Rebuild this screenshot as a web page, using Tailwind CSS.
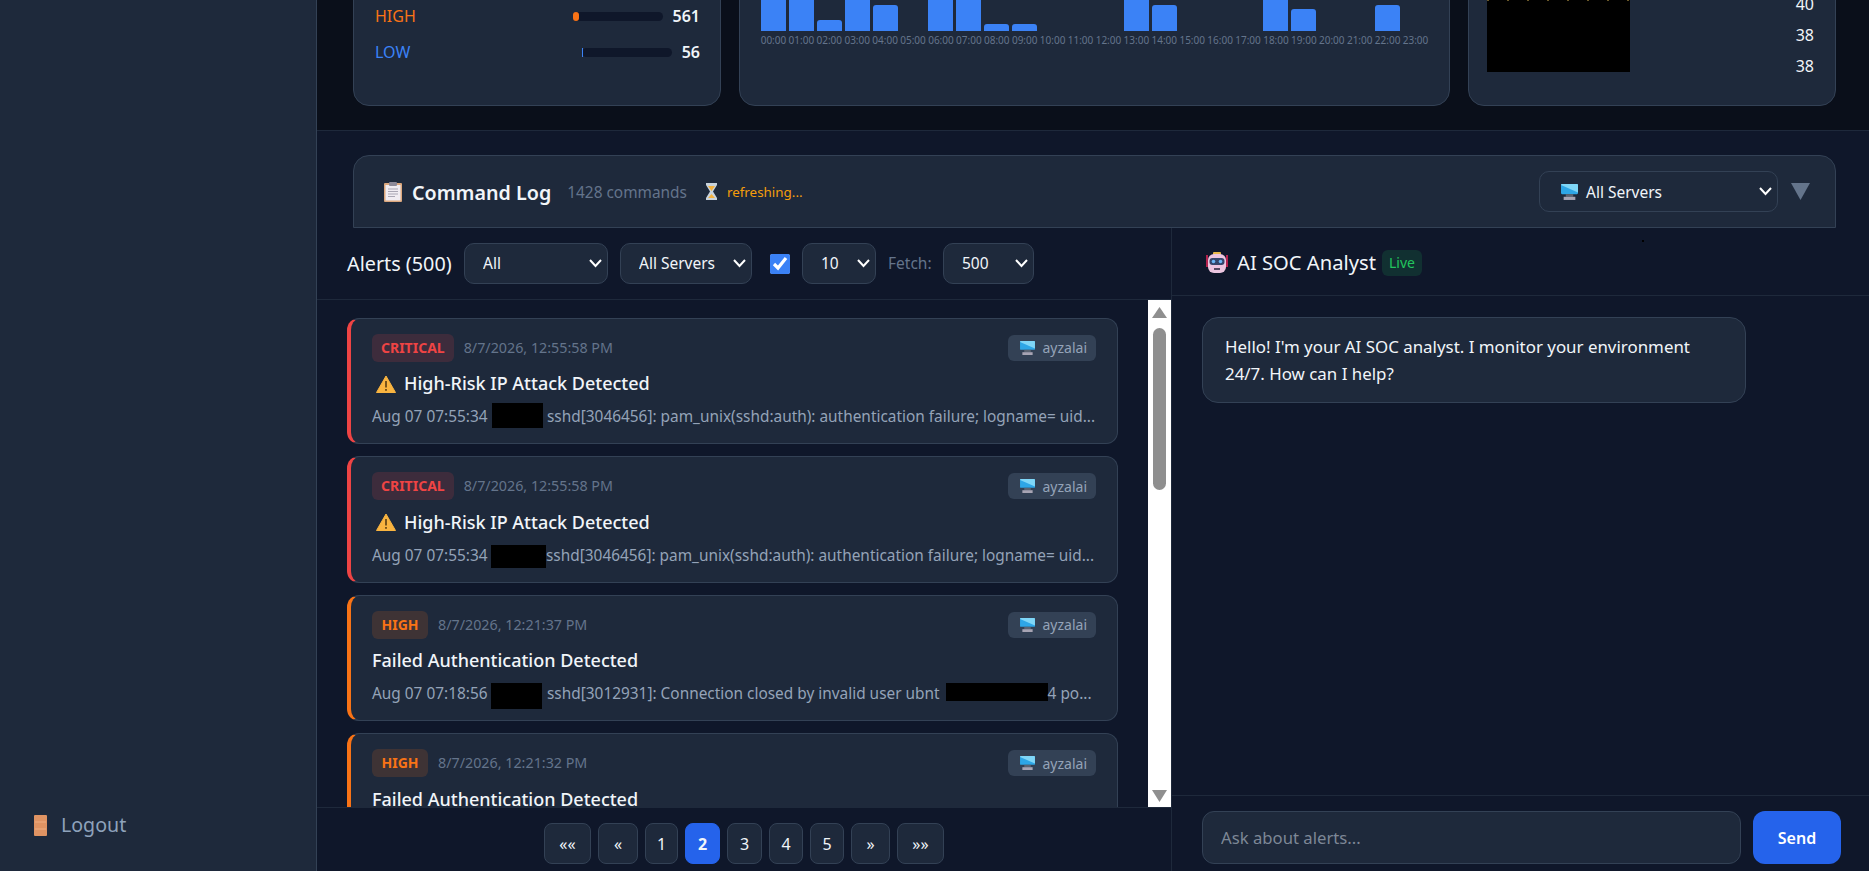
<!DOCTYPE html>
<html lang="en">
<head>
  <meta charset="UTF-8" />
  <title>SOC Dashboard</title>
  <script src="https://cdn.jsdelivr.net/npm/@tailwindcss/browser@4"></script>
</head>
<body class="h-[871px] overflow-hidden bg-[#0f172a] font-['Noto_Sans',sans-serif] text-[#f1f5f9]">

  <!-- Emoji icons -->
  <svg class="hidden">
    <symbol id="pc" viewBox="0 0 16 15">
      <rect x="0" y="0" width="16" height="9.500" rx="1" fill="#2ea6e6"/>
      <path d="M0 1 L16 8 V1 a1 1 0 0 0 -1 -1 H1 a1 1 0 0 0 -1 1z" fill="#7fd6f7"/>
      <rect x="4.500" y="9.500" width="7" height="2.500" fill="#5b6472"/>
      <rect x="2.500" y="12" width="11" height="3" fill="#a7a4b3"/>
    </symbol>
    <symbol id="warn" viewBox="0 0 20 18">
      <path d="M10 1 L19.5 17.5 H0.5 Z" fill="#f9b440" stroke="#f9b440" stroke-linejoin="round"/>
      <rect x="9.2" y="6" width="1.6" height="6.5" fill="#5a3d12"/>
      <rect x="9.2" y="14" width="1.6" height="1.8" fill="#5a3d12"/>
    </symbol>
  </svg>

  <div class="flex h-full">
    <!-- Sidebar -->
    <aside class="w-[317px] shrink-0 bg-[#1e293b] border-r border-[#334155] flex flex-col justify-end pl-[34px] pb-[35px]">
      <a class="flex items-center gap-[14px] text-[19.600px] leading-[22px] text-[#8ea2bb]">
        <svg width="13" height="21" viewBox="0 0 13 21"><rect width="13" height="21" rx="1" fill="#df9363"/><path d="M1 7h11M1 14h11" stroke="#f0b48c" stroke-width="0.8"/></svg>
        Logout
      </a>
    </aside>

    <main class="flex-1 min-w-0 flex flex-col">
      <!-- Stats, scrolled partly out of view -->
      <section class="h-[131px] shrink-0 overflow-hidden bg-[#0a0f1a] border-b border-[#1e293b] pl-[36px] pb-[24px] flex flex-col justify-end">
        <div class="grid grid-cols-[368px_711px_368px] gap-[18px]">
          <div class="h-[160px] bg-[#1e293b] border border-[#334155] rounded-2xl flex flex-col justify-end pl-[21px] pr-[20px] pb-[35px]">
            <div class="h-[36px] flex items-center text-[16px] text-[#f97316]">
              <span>HIGH</span>
              <div class="ml-auto w-[90px] h-[9px] rounded-full bg-[#0f172a]"><div class="w-[6px] h-full rounded-full bg-[#f97316]"></div></div>
              <span class="ml-[10px] font-semibold text-[#f1f5f9]">561</span>
            </div>
            <div class="h-[36px] flex items-center text-[16px] text-[#3b82f6]">
              <span>LOW</span>
              <div class="ml-auto w-[90px] h-[9px] rounded-full bg-[#0f172a]"><div class="w-[1px] h-full bg-[#3b82f6]"></div></div>
              <span class="ml-[10px] font-semibold text-[#f1f5f9]">56</span>
            </div>
          </div>

          <div class="h-[160px] bg-[#1e293b] border border-[#334155] rounded-2xl flex flex-col justify-end px-[21px] pb-[57px]">
            <div class="grid grid-cols-24 gap-x-[3px] items-end text-[10px] leading-[15px] text-[#64748b]">
              <div class="flex flex-col items-center gap-[2px]"><div class="w-full h-[50px] rounded-t-[3px] bg-[#3b82f6]"></div><span>00:00</span></div>
              <div class="flex flex-col items-center gap-[2px]"><div class="w-full h-[50px] rounded-t-[3px] bg-[#3b82f6]"></div><span>01:00</span></div>
              <div class="flex flex-col items-center gap-[2px]"><div class="w-full h-[11px] rounded-t-[3px] bg-[#3b82f6]"></div><span>02:00</span></div>
              <div class="flex flex-col items-center gap-[2px]"><div class="w-full h-[50px] rounded-t-[3px] bg-[#3b82f6]"></div><span>03:00</span></div>
              <div class="flex flex-col items-center gap-[2px]"><div class="w-full h-[26px] rounded-t-[3px] bg-[#3b82f6]"></div><span>04:00</span></div>
              <div class="flex flex-col items-center gap-[2px]"><span>05:00</span></div>
              <div class="flex flex-col items-center gap-[2px]"><div class="w-full h-[50px] rounded-t-[3px] bg-[#3b82f6]"></div><span>06:00</span></div>
              <div class="flex flex-col items-center gap-[2px]"><div class="w-full h-[50px] rounded-t-[3px] bg-[#3b82f6]"></div><span>07:00</span></div>
              <div class="flex flex-col items-center gap-[2px]"><div class="w-full h-[7px] rounded-t-[3px] bg-[#3b82f6]"></div><span>08:00</span></div>
              <div class="flex flex-col items-center gap-[2px]"><div class="w-full h-[7px] rounded-t-[3px] bg-[#3b82f6]"></div><span>09:00</span></div>
              <div class="flex flex-col items-center gap-[2px]"><span>10:00</span></div>
              <div class="flex flex-col items-center gap-[2px]"><span>11:00</span></div>
              <div class="flex flex-col items-center gap-[2px]"><span>12:00</span></div>
              <div class="flex flex-col items-center gap-[2px]"><div class="w-full h-[50px] rounded-t-[3px] bg-[#3b82f6]"></div><span>13:00</span></div>
              <div class="flex flex-col items-center gap-[2px]"><div class="w-full h-[26px] rounded-t-[3px] bg-[#3b82f6]"></div><span>14:00</span></div>
              <div class="flex flex-col items-center gap-[2px]"><span>15:00</span></div>
              <div class="flex flex-col items-center gap-[2px]"><span>16:00</span></div>
              <div class="flex flex-col items-center gap-[2px]"><span>17:00</span></div>
              <div class="flex flex-col items-center gap-[2px]"><div class="w-full h-[50px] rounded-t-[3px] bg-[#3b82f6]"></div><span>18:00</span></div>
              <div class="flex flex-col items-center gap-[2px]"><div class="w-full h-[22px] rounded-t-[3px] bg-[#3b82f6]"></div><span>19:00</span></div>
              <div class="flex flex-col items-center gap-[2px]"><span>20:00</span></div>
              <div class="flex flex-col items-center gap-[2px]"><span>21:00</span></div>
              <div class="flex flex-col items-center gap-[2px]"><div class="w-full h-[26px] rounded-t-[3px] bg-[#3b82f6]"></div><span>22:00</span></div>
              <div class="flex flex-col items-center gap-[2px]"><span>23:00</span></div>
            </div>
          </div>

          <div class="h-[160px] bg-[#1e293b] border border-[#334155] rounded-2xl flex justify-between items-end pl-[18px] pr-[21px] pb-[23px]">
            <div class="w-[143px] h-[72px] mb-[10px] bg-black">
              <div class="h-[1px] bg-[repeating-linear-gradient(90deg,#6b5a2a_0_2px,transparent_2px_20px)]"></div>
            </div>
            <div class="text-[16px] leading-[31px] text-[#f1f5f9]">
              <div>40</div>
              <div>38</div>
              <div>38</div>
            </div>
          </div>
        </div>
      </section>

      <!-- Command log header -->
      <section class="shrink-0 pt-[24px] pl-[36px] pr-[33px]">
        <div class="h-[73px] bg-[#1e293b] border border-[#334155] rounded-t-2xl flex items-center pl-[30px] pr-[25px]">
          <svg width="18" height="20" viewBox="0 0 18 20"><rect y="1" width="18" height="19" rx="1" fill="#dba77d"/><rect x="1.500" y="3" width="15" height="15.500" fill="#f0ecf2"/><path d="M4 7h10M4 9.500h10M4 12h10M4 14.500h7" stroke="#a9a6b4"/><rect x="5" y="0" width="8" height="4" rx="1" fill="#8d8a99"/></svg>
          <span class="ml-[10px] mt-[2px] text-[19.700px] font-semibold">Command Log</span>
          <span class="ml-[16px] mt-[2px] text-[15.400px] text-[#64748b]">1428 commands</span>
          <svg class="ml-[19px]" width="11" height="17" viewBox="0 0 11 17"><path d="M0 0h11v2L7 8.500l4 6.500v2H0v-2l4-6.500L0 2z" fill="#c9d3dc"/><path d="M2 3h7L5.500 8zM2 15l3.500-4 3.500 4z" fill="#f4b23f"/></svg>
          <span class="ml-[10px] mt-[2px] text-[13.400px] text-[#f59e0b]">refreshing...</span>
          <div class="relative ml-auto w-[239px] h-[41px]">
            <div class="h-full bg-[#1e293b] border border-[#334155] rounded-[10px] flex items-center pl-[21px] text-[15.500px]">
              <svg class="w-[17px] h-[16px] mr-[8px]"><use href="#pc"/></svg><span class="mt-[2px]">All Servers</span>
            </div>
            <svg class="absolute right-[6px] top-[15px]" width="13" height="10" viewBox="0 0 13 10" fill="none"><path d="M1 2l5.500 6L12 2" stroke="#fff" stroke-width="2"/></svg>
          </div>
          <svg class="ml-[13px]" width="19" height="17" viewBox="0 0 19 17"><path d="M0 0h19L9.500 17z" fill="#64748b"/></svg>
        </div>
      </section>

      <div class="flex-1 min-h-0 flex">
        <!-- Alerts pane -->
        <section class="w-[855px] shrink-0 border-r border-[#1e293b] flex flex-col">
          <div class="h-[72px] shrink-0 border-b border-[#1e293b] flex items-center pl-[30px] gap-[12px] text-[15.500px]">
            <h2 class="w-[105px] text-[19.800px] whitespace-nowrap">Alerts (500)</h2>
            <div class="relative w-[144px] h-[41px]"><select class="appearance-none w-full h-full bg-[#1e293b] border border-[#334155] rounded-[10px] pl-[18px]"><option>All</option></select><svg class="absolute right-[6px] top-[15px]" width="13" height="10" viewBox="0 0 13 10" fill="none"><path d="M1 2l5.500 6L12 2" stroke="#fff" stroke-width="2"/></svg></div>
            <div class="relative w-[132px] h-[41px]"><select class="appearance-none w-full h-full bg-[#1e293b] border border-[#334155] rounded-[10px] pl-[18px]"><option>All Servers</option></select><svg class="absolute right-[6px] top-[15px]" width="13" height="10" viewBox="0 0 13 10" fill="none"><path d="M1 2l5.500 6L12 2" stroke="#fff" stroke-width="2"/></svg></div>
            <input type="checkbox" checked class="w-[20px] h-[20px] ml-[6px] accent-[#3b82f6]" />
            <div class="relative w-[74px] h-[41px]"><select class="appearance-none w-full h-full bg-[#1e293b] border border-[#334155] rounded-[10px] pl-[18px]"><option>10</option></select><svg class="absolute right-[6px] top-[15px]" width="13" height="10" viewBox="0 0 13 10" fill="none"><path d="M1 2l5.500 6L12 2" stroke="#fff" stroke-width="2"/></svg></div>
            <span class="w-[43px] text-[#64748b]">Fetch:</span>
            <div class="relative w-[91px] h-[41px]"><select class="appearance-none w-full h-full bg-[#1e293b] border border-[#334155] rounded-[10px] pl-[18px]"><option>500</option></select><svg class="absolute right-[6px] top-[15px]" width="13" height="10" viewBox="0 0 13 10" fill="none"><path d="M1 2l5.500 6L12 2" stroke="#fff" stroke-width="2"/></svg></div>
          </div>

          <div class="flex-1 min-h-0 flex">
            <div class="flex-1 min-w-0 overflow-hidden pl-[30px] pr-[30px] pt-[17.600px] flex flex-col gap-[12px]">

              <article class="h-[126.500px] shrink-0 bg-[#1e293b] border border-[#334155] border-l-4 border-l-[#ef4444] rounded-xl pl-[21px] pr-[21px] pt-[15px]">
                <div class="h-[28px] flex items-center">
                  <span class="h-[28px] px-[9px] rounded-md bg-[#ef4444]/15 text-[14px] leading-[28px] font-bold text-[#ef4444]">CRITICAL</span>
                  <span class="ml-[10px] text-[14.300px] text-[#64748b]">8/7/2026, 12:55:58 PM</span>
                  <span class="ml-auto h-[26px] pl-[12px] pr-[9px] rounded-md bg-[#334155] flex items-center gap-[7px] text-[14px] text-[#94a3b8]"><svg class="w-[15px] h-[14px]"><use href="#pc"/></svg>ayzalai</span>
                </div>
                <h3 class="mt-[10px] h-[24px] flex items-center text-[18px] font-medium"><svg class="w-[20px] h-[18px] ml-[4px] mr-[8px]"><use href="#warn"/></svg>High-Risk IP Attack Detected</h3>
                <p class="mt-[10px] h-[22px] flex items-center whitespace-nowrap text-[15.400px] text-[#94a3b8]"><span class="w-[119px]">Aug 07 07:55:34</span><span class="ml-[1px] mr-[4px] w-[51px] h-[25px] -mt-[2px] bg-black"></span><span>sshd[3046456]: pam_unix(sshd:auth): authentication failure; logname= uid...</span></p>
              </article>

              <article class="h-[126.500px] shrink-0 bg-[#1e293b] border border-[#334155] border-l-4 border-l-[#ef4444] rounded-xl pl-[21px] pr-[21px] pt-[15px]">
                <div class="h-[28px] flex items-center">
                  <span class="h-[28px] px-[9px] rounded-md bg-[#ef4444]/15 text-[14px] leading-[28px] font-bold text-[#ef4444]">CRITICAL</span>
                  <span class="ml-[10px] text-[14.300px] text-[#64748b]">8/7/2026, 12:55:58 PM</span>
                  <span class="ml-auto h-[26px] pl-[12px] pr-[9px] rounded-md bg-[#334155] flex items-center gap-[7px] text-[14px] text-[#94a3b8]"><svg class="w-[15px] h-[14px]"><use href="#pc"/></svg>ayzalai</span>
                </div>
                <h3 class="mt-[10px] h-[24px] flex items-center text-[18px] font-medium"><svg class="w-[20px] h-[18px] ml-[4px] mr-[8px]"><use href="#warn"/></svg>High-Risk IP Attack Detected</h3>
                <p class="mt-[10px] h-[22px] flex items-center whitespace-nowrap text-[15.400px] text-[#94a3b8]"><span class="w-[119px]">Aug 07 07:55:34</span><span class="w-[55px] h-[23px] mt-[3px] bg-black"></span><span>sshd[3046456]: pam_unix(sshd:auth): authentication failure; logname= uid...</span></p>
              </article>

              <article class="h-[126.500px] shrink-0 bg-[#1e293b] border border-[#334155] border-l-4 border-l-[#f97316] rounded-xl pl-[21px] pr-[21px] pt-[15px]">
                <div class="h-[28px] flex items-center">
                  <span class="h-[28px] px-[9.500px] rounded-md bg-[#f97316]/15 text-[14px] leading-[28px] font-bold text-[#f97316]">HIGH</span>
                  <span class="ml-[10px] text-[14.300px] text-[#64748b]">8/7/2026, 12:21:37 PM</span>
                  <span class="ml-auto h-[26px] pl-[12px] pr-[9px] rounded-md bg-[#334155] flex items-center gap-[7px] text-[14px] text-[#94a3b8]"><svg class="w-[15px] h-[14px]"><use href="#pc"/></svg>ayzalai</span>
                </div>
                <h3 class="mt-[10px] h-[24px] flex items-center text-[18px] font-medium">Failed Authentication Detected</h3>
                <p class="mt-[10px] h-[22px] flex items-center whitespace-nowrap text-[15.400px] text-[#94a3b8]"><span class="w-[119px]">Aug 07 07:18:56</span><span class="mr-[5px] w-[51px] h-[26px] mt-[4px] bg-black"></span><span>sshd[3012931]: Connection closed by invalid user ubnt</span><span class="ml-[6px] w-[102px] h-[18px] -mt-[4px] bg-black"></span><span>4 po...</span></p>
              </article>

              <article class="h-[126.500px] shrink-0 bg-[#1e293b] border border-[#334155] border-l-4 border-l-[#f97316] rounded-xl pl-[21px] pr-[21px] pt-[15px]">
                <div class="h-[28px] flex items-center">
                  <span class="h-[28px] px-[9.500px] rounded-md bg-[#f97316]/15 text-[14px] leading-[28px] font-bold text-[#f97316]">HIGH</span>
                  <span class="ml-[10px] text-[14.300px] text-[#64748b]">8/7/2026, 12:21:32 PM</span>
                  <span class="ml-auto h-[26px] pl-[12px] pr-[9px] rounded-md bg-[#334155] flex items-center gap-[7px] text-[14px] text-[#94a3b8]"><svg class="w-[15px] h-[14px]"><use href="#pc"/></svg>ayzalai</span>
                </div>
                <h3 class="mt-[10px] h-[24px] flex items-center text-[18px] font-medium">Failed Authentication Detected</h3>
              </article>
            </div>

            <!-- Scrollbar -->
            <div class="w-[23px] shrink-0 bg-white flex flex-col items-center pt-[7px] pb-[5px]">
              <svg width="15" height="11" viewBox="0 0 15 11"><path d="M7.500 0L15 11H0z" fill="#8f8f8f"/></svg>
              <div class="w-[13px] h-[162px] mt-[10px] rounded-full bg-[#8f8f8f]"></div>
              <svg class="mt-auto" width="15" height="12" viewBox="0 0 15 12"><path d="M0 0h15L7.500 12z" fill="#8f8f8f"/></svg>
            </div>
          </div>

          <!-- Pagination -->
          <nav class="h-[64px] shrink-0 border-t border-[#1e293b] pt-[15px] flex justify-center gap-[7px] text-[16px]">
            <button class="w-[47px] h-[41px] bg-[#1e293b] border border-[#334155] rounded-lg">««</button>
            <button class="w-[40px] h-[41px] bg-[#1e293b] border border-[#334155] rounded-lg">«</button>
            <button class="w-[33px] h-[41px] bg-[#1e293b] border border-[#334155] rounded-lg">1</button>
            <button class="w-[35px] h-[41px] bg-[#2563eb] border border-[#2563eb] rounded-lg font-bold">2</button>
            <button class="w-[35px] h-[41px] bg-[#1e293b] border border-[#334155] rounded-lg">3</button>
            <button class="w-[34px] h-[41px] bg-[#1e293b] border border-[#334155] rounded-lg">4</button>
            <button class="w-[34px] h-[41px] bg-[#1e293b] border border-[#334155] rounded-lg">5</button>
            <button class="w-[39px] h-[41px] bg-[#1e293b] border border-[#334155] rounded-lg">»</button>
            <button class="w-[47px] h-[41px] bg-[#1e293b] border border-[#334155] rounded-lg">»»</button>
          </nav>
        </section>

        <!-- Chat pane -->
        <section class="flex-1 min-w-0 flex flex-col relative">
          <div class="h-[68px] shrink-0 border-b border-[#1e293b] pt-[2px] flex items-center pl-[34px]">
            <svg width="22" height="21" viewBox="0 0 22 21"><path d="M1 3v12M21 3v12" stroke="#b3234f" stroke-width="2"/><rect x="7" y="0" width="8" height="3" rx="1" fill="#e8b84a"/><rect x="2" y="2" width="18" height="19" rx="6" fill="#ecc6e0"/><rect x="3.500" y="6" width="15" height="7" rx="3" fill="#34466b"/><circle cx="7.500" cy="9.500" r="1.800" fill="#6bb6f5"/><circle cx="14.500" cy="9.500" r="1.800" fill="#6bb6f5"/><rect x="8" y="16" width="6" height="2" fill="#554a63"/></svg>
            <h2 class="ml-[9px] text-[20.200px] whitespace-nowrap">AI SOC Analyst</h2>
            <span class="ml-[6px] h-[26px] px-[7px] rounded-md bg-[#22c55e]/15 text-[14px] leading-[26px] text-[#22c55e]">Live</span>
          </div>
          <span class="absolute left-[470px] top-[12px] w-[2px] h-[2px] bg-black"></span>

          <div class="flex-1 min-h-0 pt-[21px] pl-[30px]">
            <div class="w-[544px] h-[86px] bg-[#1e293b] border border-[#334155] rounded-2xl px-[22px] py-[15px] text-[16.900px] leading-[27px]">Hello! I'm your AI SOC analyst. I monitor your environment 24/7. How can I help?</div>
          </div>

          <div class="h-[76px] shrink-0 border-t border-[#1e293b] pt-[15px] pl-[30px] flex gap-[12px]">
            <input placeholder="Ask about alerts..." class="w-[539px] h-[53px] bg-[#1e293b] border border-[#334155] rounded-xl px-[18px] text-[16.700px] placeholder:text-[#7d8796]" />
            <button class="w-[88px] h-[53px] bg-[#2563eb] rounded-xl text-[16px] font-semibold text-white">Send</button>
          </div>
        </section>
      </div>
    </main>
  </div>
</body>
</html>
